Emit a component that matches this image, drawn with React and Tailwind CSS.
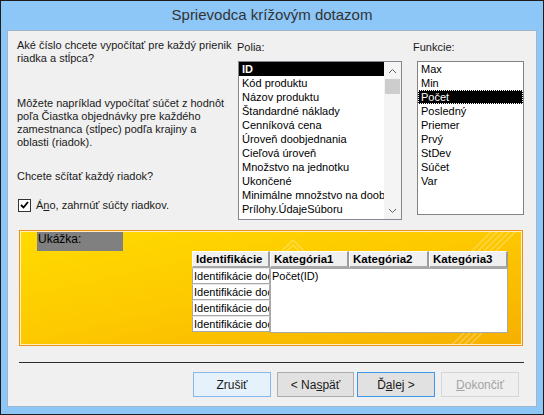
import React from 'react';

const fields = [
  'ID',
  'Kód produktu',
  'Názov produktu',
  'Štandardné náklady',
  'Cenníková cena',
  'Úroveň doobjednania',
  'Cieľová úroveň',
  'Množstvo na jednotku',
  'Ukončené',
  'Minimálne množstvo na doobjednanie',
  'Prílohy.ÚdajeSúboru',
];

const functions = ['Max', 'Min', 'Počet', 'Posledný', 'Priemer', 'Prvý', 'StDev', 'Súčet', 'Var'];

function Chevron({ up }) {
  return (
    <svg width="9" height="6" viewBox="0 0 9 6">
      <path d={up ? 'M1 5 L4.5 1.5 L8 5' : 'M1 1 L4.5 4.5 L8 1'} fill="none" stroke="#606060" strokeWidth="1" />
    </svg>
  );
}

function HeaderCell({ children, w }) {
  return (
    <div
      className={`${w} h-[17px] bg-[#f0f0f0] border-t border-l border-t-white border-l-white border-r-2 border-b-2 border-r-[#9c9c9c] border-b-[#a8a8a8] pl-[3px] text-[11.5px] font-bold leading-[14px] text-black whitespace-nowrap overflow-hidden`}
    >
      {children}
    </div>
  );
}

export default function App() {
  return (
    <div className="flex h-[415px] w-[544px] flex-col border border-[#1c1c1c] bg-[#8cc7f8] font-['Liberation_Sans',Arial,sans-serif] text-black">
      <div className="flex h-[29px] items-center justify-center text-[15px] text-[#333]">Sprievodca krížovým dotazom</div>

      <div className="mx-[6px] mb-[7px] flex flex-1 flex-col border border-[#9fb6cc] bg-[#f0f0f0] pl-[11px] pr-[12px] pt-[8px]">
        {/* top row */}
        <div className="-ml-[2px] flex h-[181px]">
          <div className="w-[220px] whitespace-nowrap text-[11px] leading-[13px] text-[#1a1a1a]">
            <p>Aké číslo chcete vypočítať pre každý prienik<br />riadka a stĺpca?</p>
            <p className="mt-[32px]">
              Môžete napríklad vypočítať súčet z hodnôt<br />poľa Čiastka objednávky pre každého<br />zamestnanca (stĺpec) podľa krajiny a<br />oblasti (riadok).
            </p>
            <p className="mt-[21px]">Chcete sčítať každý riadok?</p>
            <div className="mt-[15px] flex h-[14px] items-center">
              <div className="ml-[1px] flex h-[13px] w-[13px] items-center justify-center border border-[#333] bg-white">
                <svg width="9" height="8" viewBox="0 0 9 8">
                  <path d="M1 4 L3.5 6.5 L8 1" fill="none" stroke="#000" strokeWidth="1.8" />
                </svg>
              </div>
              <span className="ml-[5px]">
                Á<span className="underline">n</span>o, zahrnúť súčty riadkov.
              </span>
            </div>
          </div>

          <div className="w-[165px]">
            <div className="mt-[2px] h-[13px] text-[11px] leading-[13px] text-[#1a1a1a]">Polia:</div>
            <div className="ml-[1px] mt-[7px] flex h-[159px] w-[164px] border border-[#828790] bg-white">
              <div className="w-[145px] overflow-hidden text-[11px]">
                {fields.map((f, i) => (
                  <div
                    key={f}
                    className={`h-[14px] pl-[3px] leading-[14px] whitespace-nowrap ${i === 0 ? 'bg-black font-bold text-white' : ''}`}
                  >
                    {f}
                  </div>
                ))}
              </div>
              <div className="flex w-[17px] flex-col bg-[#f4f4f4]">
                <div className="flex h-[17px] items-center justify-center">
                  <Chevron up />
                </div>
                <div className="mx-[1px] h-[15px] bg-[#cdcdcd]" />
                <div className="flex-1" />
                <div className="flex h-[17px] items-center justify-center">
                  <Chevron />
                </div>
              </div>
            </div>
          </div>

          <div className="ml-[11px] w-[111px]">
            <div className="mt-[2px] h-[13px] text-[11px] leading-[13px] text-[#1a1a1a]">Funkcie:</div>
            <div className="ml-[4px] mt-[7px] h-[154px] w-[107px] border border-[#828282] bg-white text-[11px]">
              {functions.map((f) => (
                <div
                  key={f}
                  className={`h-[14px] pl-[3px] leading-[14px] ${f === 'Počet' ? 'bg-black text-white outline outline-1 outline-dotted outline-white -outline-offset-1' : ''}`}
                >
                  {f}
                </div>
              ))}
            </div>
          </div>
        </div>

        {/* preview */}
        <div className="mt-[10px] h-[116px] w-[504px] border border-[#ef8f1c]">
          <div className="relative h-full w-full overflow-hidden border border-[#fff2c0] bg-gradient-to-br from-[#ffdb00] via-[#fdc800] to-[#f6b000]">
            <svg className="absolute inset-0" width="502" height="114" viewBox="0 0 502 114">
              <g fill="none" stroke="#fff" strokeOpacity="0.28" strokeWidth="1.5">
                <path d="M258 22 L272 8 L286 22" />
                <path d="M263 22 L272 13 L281 22" />
                <path d="M440 30 L470 0" />
                <path d="M446 30 L476 0" />
                <path d="M452 30 L482 0" />
                <path d="M458 30 L488 0" />
                <path d="M464 30 L494 0" />
                <path d="M430 114 L444 100" />
                <path d="M436 114 L450 100" />
                <path d="M442 114 L456 100" />
                <path d="M448 114 L462 100" />
              </g>
            </svg>
            <div className="relative ml-[16px] h-[19px] w-[86px] bg-[#808080] pl-[1px] text-[12px] leading-[14px] text-black">Ukážka:</div>
            <div className="relative ml-[171px] w-[316px]">
              <div className="flex">
                <HeaderCell w="w-[78px]">Identifikácie</HeaderCell>
                <HeaderCell w="w-[79px]">Kategória1</HeaderCell>
                <HeaderCell w="w-[80px]">Kategória2</HeaderCell>
                <HeaderCell w="w-[79px]">Kategória3</HeaderCell>
              </div>
              <div className="flex text-[11px] leading-[14px]">
                <div className="w-[78px]">
                  {[0, 1, 2, 3].map((i) => (
                    <div
                      key={i}
                      className="h-[16px] overflow-hidden whitespace-nowrap border-x border-b border-[#a9a9a9] border-t border-t-[#e6e6e6] bg-white pl-[1px]"
                    >
                      Identifikácie dodávateľa
                    </div>
                  ))}
                </div>
                <div className="h-[65px] w-[238px] border border-[#a9a9a9] bg-white pl-[1px]">Počet(ID)</div>
              </div>
            </div>
          </div>
        </div>

        <div className="mt-[16px] h-px w-[505px] bg-[#2d2d2d]" />

        {/* buttons */}
        <div className="ml-[174px] mt-[9px] flex text-[12px]">
          <button className="h-[25px] w-[78px] border border-[#86b8ea] bg-[#e5f1fb] text-[#1a1a1a]">Zrušiť</button>
          <button className="ml-[6px] h-[25px] w-[77px] border border-[#adadad] bg-[#e1e1e1] text-[#1a1a1a]">
            &lt; Na<span className="underline">s</span>päť
          </button>
          <button className="ml-[3px] h-[25px] w-[78px] border border-[#3c97ec] bg-[#e1e1e1] text-[#1a1a1a]">
            Ď<span className="underline">a</span>lej &gt;
          </button>
          <button className="ml-[6px] h-[25px] w-[78px] border border-[#d6d6d6] bg-[#efefef] text-[#a3a3a3]">
            <span className="underline">D</span>okončiť
          </button>
        </div>
      </div>
    </div>
  );
}
